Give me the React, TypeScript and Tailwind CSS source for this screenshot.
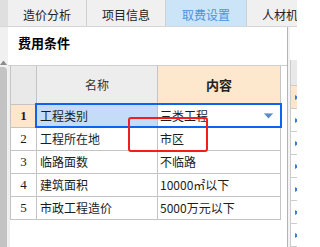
const tabs = [
  { label: '造价分析', w: 'w-[79px] justify-center', active: false },
  { label: '项目信息', w: 'w-[79px] justify-center', active: false },
  { label: '取费设置', w: 'w-[81px] justify-center', active: true },
  { label: '人材机汇总', w: 'w-[79px] justify-start pl-[15px] overflow-hidden', active: false },
];

const rows = [
  { n: 1, name: '工程类别', value: '三类工程' },
  { n: 2, name: '工程所在地', value: '市区' },
  { n: 3, name: '临路面数', value: '不临路' },
  { n: 4, name: '建筑面积', value: '10000㎡以下' },
  { n: 5, name: '市政工程造价', value: '5000万元以下' },
];

function Caret() {
  return (
    <svg width="9" height="6" viewBox="0 0 9 6" className="ml-auto mr-[7px] shrink-0">
      <path d="M0 0.5 H9" stroke="#9cbde0" strokeWidth="1" />
      <path d="M0.5 1 L8.5 1 L4.5 5.5 Z" fill="#5a8cc4" />
    </svg>
  );
}

function SideMark() {
  return (
    <svg width="4" height="5" viewBox="0 0 4 5" className="ml-[4px]">
      <path d="M0 0 L4 2.5 L0 5 Z" fill="#2f7de1" />
    </svg>
  );
}

export default function App() {
  return (
    <div className="relative w-[297px] h-[247px] overflow-hidden bg-white font-['Noto_Sans_CJK_SC','Liberation_Sans',sans-serif] text-[12px] text-[#1c1c1c]">
      {/* Tab bar */}
      <div className="flex h-[27px] bg-[#f0f0f0] border-b border-[#d6d6d6] overflow-hidden">
        <div className="w-[8px] shrink-0 bg-[#dfdfdf]" />
        {tabs.map((t) => (
          <div
            key={t.label}
            className={`${t.w} shrink-0 flex items-center pt-[3px] border-r border-[#cfcfcf] whitespace-nowrap ${
              t.active ? 'bg-[#cce4f7] text-[#4b93e0]' : 'text-[#222]'
            }`}
          >
            {t.label}
          </div>
        ))}
      </div>

      <div className="flex h-[220px]">
        {/* Left scroll strip */}
        <div className="w-[8px] shrink-0 flex flex-col bg-[#f0f0f0]">
          <div className="h-[33px]" />
          <svg width="7" height="5" viewBox="0 0 7 5">
            <path d="M0 5 L3.5 0.5 L7 5 Z" fill="#8a8a8a" />
          </svg>
          <div className="mt-[2px] w-[7px] flex-1 bg-[#c3c3c3] rounded-tr-[4px]" />
        </div>

        {/* Main panel */}
        <div className="w-[279px] shrink-0 flex flex-col bg-white">
          <div className="h-[38px] pl-[10px] pt-[7px] text-[13px] leading-[18px] font-bold text-black">
            费用条件
          </div>
          <div className="flex flex-1 border-t border-[#cfcfcf]">
            <div className="w-[2px] bg-[#efefef]" />
            <div className="flex flex-col">
              {/* header */}
              <div className="flex h-[39px] border-l border-b border-[#c4c4c4]">
                <div className="w-[26px] bg-[#e9e9e9] border-r border-[#c4c4c4]" />
                <div className="w-[121px] bg-[#ededed] border-r border-[#c4c4c4] flex items-center justify-center text-[#333]">
                  名称
                </div>
                <div className="w-[123px] bg-[#fde8cd] border-r border-[#c4c4c4] flex items-center justify-center font-bold text-[13px] text-[#222]">
                  内容
                </div>
              </div>
              {rows.map((r) => (
                <div key={r.n} className="flex h-[23px] border-l border-b border-[#c4c4c4]">
                  <div
                    className={`w-[26px] flex items-center justify-center border-r border-[#c4c4c4] font-['Liberation_Serif',serif] text-[13px] ${
                      r.n === 1 ? 'bg-[#fde6cb] font-bold' : 'bg-white'
                    }`}
                  >
                    {r.n}
                  </div>
                  <div
                    className={`w-[121px] flex items-center pl-[3px] border-r border-[#c4c4c4] ${
                      r.n === 1 ? 'bg-[#c4dcf7]' : ''
                    }`}
                  >
                    {r.name}
                  </div>
                  <div className="w-[123px] flex items-center pl-[2px] border-r border-[#c4c4c4] whitespace-nowrap">
                    {r.value}
                    {r.n === 1 && <Caret />}
                  </div>
                </div>
              ))}
            </div>
          </div>
        </div>

        {/* Right neighbour panel */}
        <div className="flex-1 flex border-l border-[#b4b4b4] bg-[#f3f3f3]">
          <div className="w-[2px]" />
          <div className="flex-1 flex flex-col bg-white">
            <div className="h-[38px]" />
            <div className="h-[30px] bg-[#e9e9e9] border-l border-b border-[#cccccc]" />
            {[0, 1, 2, 3, 4, 5, 6].map((i) => (
              <div
                key={i}
                className={`h-[23px] shrink-0 flex items-center border-l border-b border-[#cccccc] ${
                  i === 0 ? 'bg-[#fde6cb]' : ''
                }`}
              >
                <SideMark />
              </div>
            ))}
          </div>
        </div>
      </div>

      {/* selection outline on row 1 */}
      <div className="absolute left-[35px] top-[103px] w-[247px] h-[25px] border-2 border-[#0c63f4]" />

      {/* red annotation box */}
      <div className="absolute left-[128px] top-[117px] w-[80px] h-[35px] border-[2.5px] border-[#f21d1d] rounded-[3px]" />
    </div>
  );
}
